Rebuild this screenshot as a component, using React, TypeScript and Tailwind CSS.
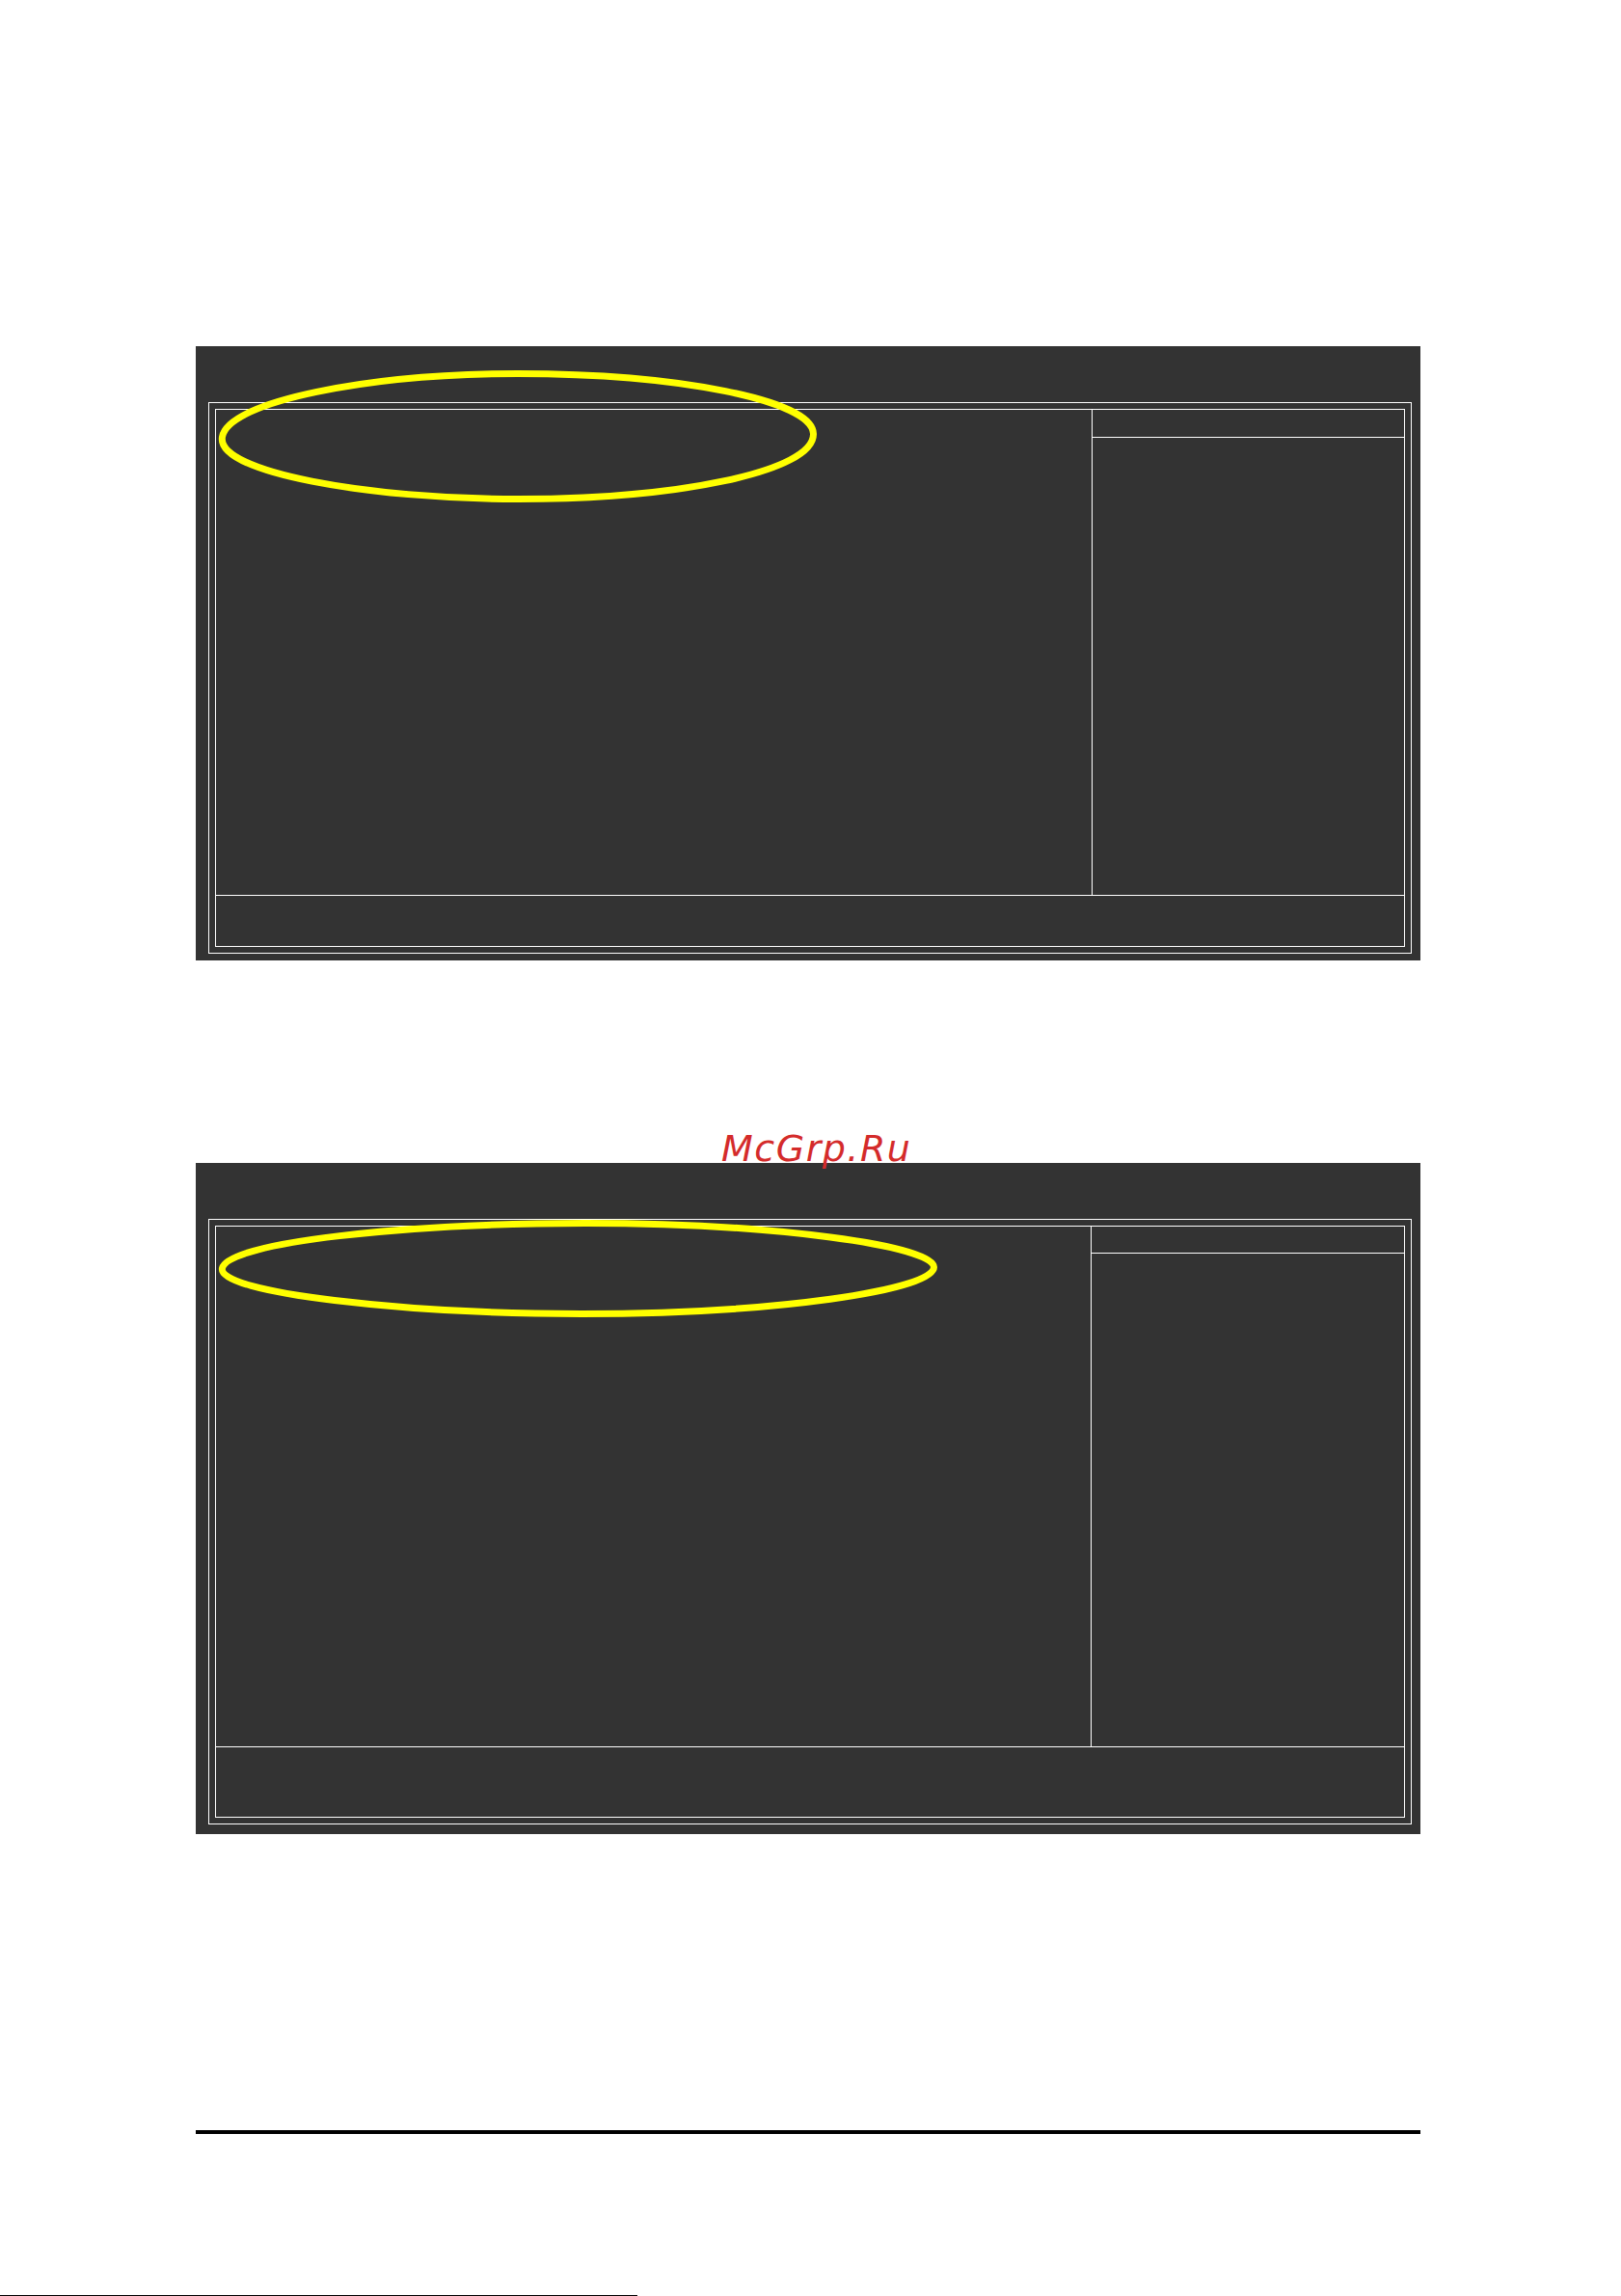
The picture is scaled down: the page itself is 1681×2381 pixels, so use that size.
import React from "react";

interface BiosFrameProps {
  topHeight: number;
  bottomHeight: number;
  headerHeight: number;
  leftWidth: number;
  padBottom: string;
  children?: React.ReactNode;
}

const BiosFrame: React.FC<BiosFrameProps> = ({
  topHeight,
  bottomHeight,
  headerHeight,
  leftWidth,
  padBottom,
  children,
}) => {
  return (
    <div className={`relative ml-[203px] w-[1270px] bg-[#333333] pl-[13px] pr-[9px] pt-[58px] ${padBottom}`}>
      <div className="border border-white p-[6px]">
        <div className="border border-white">
          <div className="flex" style={{ height: topHeight }}>
            <div className="border-r border-white" style={{ width: leftWidth }}></div>
            <div className="flex-1">
              <div className="border-b border-white" style={{ height: headerHeight }}></div>
            </div>
          </div>
          <div className="border-t border-white" style={{ height: bottomHeight }}></div>
        </div>
      </div>
      {children}
    </div>
  );
};

export default function App() {
  return (
    <div className="relative w-[1681px] h-[2381px] bg-white overflow-hidden">
      <div className="h-[359px]"></div>

      <BiosFrame topHeight={503} bottomHeight={53} headerHeight={29} leftWidth={909} padBottom="pb-[7px]">
        {/* hand-drawn highlight */}
        <svg className="absolute left-0 top-0 pointer-events-none" width="1270" height="637">
          <path
            d="M 27.5 94 C 34 57, 180 28.5, 334 28.5 C 500 28.5, 640 56, 640.5 91 C 641 130, 500 158.5, 334 158.5 C 180 158.5, 21 131, 27.5 94 Z"
            fill="none"
            stroke="#ffff00"
            strokeWidth="7"
          />
        </svg>
      </BiosFrame>

      <div className="h-[210px]"></div>

      <BiosFrame topHeight={539} bottomHeight={73} headerHeight={28} leftWidth={908} padBottom="pb-[10px]">
        <svg className="absolute left-0 top-0 pointer-events-none" width="1270" height="697">
          <path
            d="M 27.5 109 C 34 82, 220 62.5, 404 62.5 C 600 62.5, 765 86, 765.5 108 C 766 132, 600 156.5, 400 156.5 C 220 156.5, 21 135, 27.5 109 Z"
            fill="none"
            stroke="#ffff00"
            strokeWidth="7"
          />
        </svg>
      </BiosFrame>

      <div className="h-[307px]"></div>
      <div className="ml-[203px] w-[1270px] h-[4px] bg-black"></div>

      <div className="absolute left-[748px] top-[1167px] text-[38px] leading-[48px] italic tracking-[1.5px] text-[#d42b2b] font-['DejaVu_Sans',sans-serif]">
        McGrp.Ru
      </div>

      <div className="absolute left-0 bottom-0 w-[661px] h-px bg-black"></div>
    </div>
  );
}
